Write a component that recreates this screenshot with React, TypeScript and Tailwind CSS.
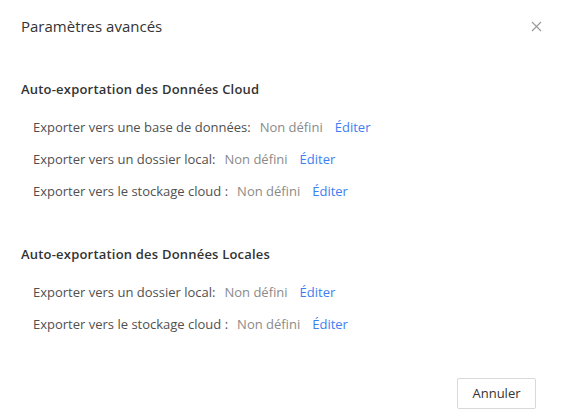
import React from "react";

const Row = ({ label }: { label: string }) => (
  <div className="flex items-center h-[32px] pl-[33px] text-[13px] text-[#505050]">
    <span>{label}</span>
    <span className="ml-[9px] text-[#8a8a8a]">Non défini</span>
    <span className="ml-[12px] text-[#3e7ef3] cursor-pointer">Éditer</span>
  </div>
);

export default function App() {
  return (
    <div
      className="w-[566px] h-[419px] bg-white flex flex-col"
      style={{ fontFamily: '"Open Sans", "Noto Sans", sans-serif' }}
    >
      <div className="flex items-center justify-between h-[52px] pl-[21px] pr-[24px]">
        <span className="text-[15px] font-medium text-[#333]">Paramètres avancés</span>
        <svg width="11" height="11" viewBox="0 0 11 11" className="text-[#999]">
          <path d="M1 1L10 10M10 1L1 10" stroke="currentColor" strokeWidth="1.1" />
        </svg>
      </div>
      <div className="mt-[22px] pl-[21px] h-[32px] flex items-center text-[13px] font-semibold tracking-[0.2px] text-[#333]">
        Auto-exportation des Données Cloud
      </div>
      <div className="mt-[6px]">
        <Row label="Exporter vers une base de données:" />
        <Row label="Exporter vers un dossier local:" />
        <Row label="Exporter vers le stockage cloud :" />
      </div>
      <div className="mt-[31px] pl-[21px] h-[32px] flex items-center text-[13px] font-semibold tracking-[0.2px] text-[#333]">
        Auto-exportation des Données Locales
      </div>
      <div className="mt-[6px]">
        <Row label="Exporter vers un dossier local:" />
        <Row label="Exporter vers le stockage cloud :" />
      </div>
      <div className="flex justify-end pr-[30px] mt-auto mb-[10px]">
        <button className="w-[79px] h-[31px] border border-[#d9d9d9] rounded-[2px] text-[13px] text-[#333] bg-white">
          Annuler
        </button>
      </div>
    </div>
  );
}
